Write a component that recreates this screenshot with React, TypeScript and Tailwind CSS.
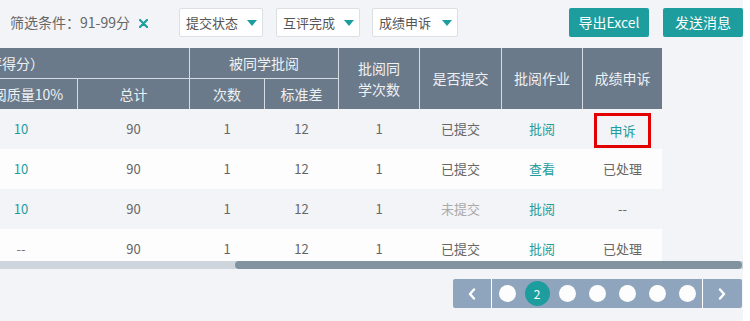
import React from "react";

const COLS = "grid-cols-[112px_111px_74px_73px_80px_81px_80px_79px]";

function Dropdown({ label, w }: { label: string; w: string }) {
  return (
    <div
      className={`${w} h-[29px] bg-white border border-[#dcdfe3] rounded-[2px] flex items-center justify-between pl-[6px] pr-[5px] text-[13px] text-[#555]`}
    >
      <span>{label}</span>
      <span className="w-0 h-0 border-l-[5.5px] border-r-[5.5px] border-t-[6px] border-l-transparent border-r-transparent border-t-[#1d9d9e]" />
    </div>
  );
}

type Row = {
  q: string;
  total: string;
  times: string;
  sd: string;
  peer: string;
  submit: string;
  review: string;
  appeal: string;
};

const rows: Row[] = [
  { q: "10", total: "90", times: "1", sd: "12", peer: "1", submit: "已提交", review: "批阅", appeal: "申诉" },
  { q: "10", total: "90", times: "1", sd: "12", peer: "1", submit: "已提交", review: "查看", appeal: "已处理" },
  { q: "10", total: "90", times: "1", sd: "12", peer: "1", submit: "未提交", review: "批阅", appeal: "--" },
  { q: "--", total: "90", times: "1", sd: "12", peer: "1", submit: "已提交", review: "批阅", appeal: "已处理" },
];

export default function App() {
  return (
    <div
      className="w-[750px] h-[321px] bg-white overflow-hidden"
      style={{ fontFamily: '"Noto Sans CJK SC", "Noto Sans", sans-serif' }}
    >
      <div className="w-[743px] h-full bg-[#f3f4f7] flex flex-col">
        {/* top bar */}
        <div className="h-[45px] flex items-center pl-[10px] shrink-0">
          <div className="w-[169px] flex items-center">
            <span className="text-[14px] text-[#666]">筛选条件：91-99分</span>
            <svg width="9" height="9" viewBox="0 0 9 9" className="ml-[9px] mt-[2px]">
              <path d="M1 1 L8 8 M8 1 L1 8" stroke="#1d9d9e" strokeWidth="2.2" strokeLinecap="round" />
            </svg>
          </div>
          <Dropdown label="提交状态" w="w-[84px]" />
          <div className="ml-[13px]">
            <Dropdown label="互评完成" w="w-[84px]" />
          </div>
          <div className="ml-[12px]">
            <Dropdown label="成绩申诉" w="w-[86px]" />
          </div>
          <div className="ml-auto flex gap-[14px]">
            <button className="w-[80px] h-[29px] bg-[#1d9d9e] text-white text-[14px] rounded-[2px] flex items-center justify-center">
              导出Excel
            </button>
            <button className="w-[80px] h-[29px] bg-[#1d9d9e] text-white text-[14px] rounded-[2px] flex items-center justify-center">
              发送消息
            </button>
          </div>
        </div>

        {/* table */}
        <div className="mt-[3px] w-full h-[213px] overflow-hidden shrink-0">
          <div className="ml-[-35px] w-[697px]">
            <div
              className={`grid ${COLS} grid-rows-[30px_30px] gap-px bg-[#d6dce2] text-[14px] text-[#eef1f4]`}
            >
              <div className="col-span-2 bg-[#6b7a8a] flex items-center justify-end pr-[145px] whitespace-nowrap">
                （互评得分）
              </div>
              <div className="col-span-2 bg-[#6b7a8a] flex items-center justify-center">被同学批阅</div>
              <div className="row-span-2 bg-[#6b7a8a] flex items-center justify-center text-center leading-[21px]">
                批阅同
                <br />
                学次数
              </div>
              <div className="row-span-2 bg-[#6b7a8a] flex items-center justify-center">是否提交</div>
              <div className="row-span-2 bg-[#6b7a8a] flex items-center justify-center">批阅作业</div>
              <div className="row-span-2 bg-[#6b7a8a] flex items-center justify-center">成绩申诉</div>
              <div className="bg-[#6b7a8a] flex items-center justify-center whitespace-nowrap">批阅质量10%</div>
              <div className="bg-[#6b7a8a] flex items-center justify-center">总计</div>
              <div className="bg-[#6b7a8a] flex items-center justify-center">次数</div>
              <div className="bg-[#6b7a8a] flex items-center justify-center">标准差</div>
            </div>
            {rows.map((r, i) => (
              <div
                key={i}
                className={`grid ${COLS} gap-x-px h-[40px] items-center text-center text-[13px] text-[#666] ${
                  i % 2 === 0 ? "bg-[#f3f4f7]" : "bg-[#fdfdfd]"
                }`}
              >
                <div className={r.q === "--" ? "text-[#777]" : "text-[#1d9d9e]"}>{r.q}</div>
                <div>{r.total}</div>
                <div>{r.times}</div>
                <div>{r.sd}</div>
                <div>{r.peer}</div>
                <div className={r.submit === "未提交" ? "text-[#aaa]" : ""}>{r.submit}</div>
                <div className="text-[#1d9d9e]">{r.review}</div>
                <div className="flex items-center justify-center">
                  {i === 0 ? (
                    <span className="w-[57px] h-[35px] mt-[3px] border-[3px] border-[#e30000] flex items-center justify-center text-[#1d9d9e]">
                      {r.appeal}
                    </span>
                  ) : (
                    <span>{r.appeal}</span>
                  )}
                </div>
              </div>
            ))}
          </div>
        </div>

        {/* scrollbar */}
        <div className="h-[8px] w-full bg-[#cfd5dc] flex shrink-0">
          <div className="ml-[235px] flex-1 mr-[1px] bg-[#81939f] rounded-full" />
        </div>

        {/* pagination */}
        <div className="mt-[10px] flex justify-end pr-[1px]">
          <div className="h-[29px] w-[289px] bg-[#8fa5bd] rounded-[2px] flex">
            <div className="w-[39px] flex items-center justify-center border-r border-white">
              <svg width="8" height="12" viewBox="0 0 8 12">
                <path d="M6 1.5 L2 6 L6 10.5" fill="none" stroke="white" strokeWidth="2.4" strokeLinecap="round" strokeLinejoin="round" />
              </svg>
            </div>
            <div className="w-[210px] flex">
              {[1, 2, 3, 4, 5, 6, 7].map((n) => (
                <div key={n} className="w-[30px] flex items-center justify-center">
                  {n === 2 ? (
                    <span className="w-[25px] h-[25px] rounded-full bg-[#1d9d9e] text-white text-[12px] flex items-center justify-center">
                      2
                    </span>
                  ) : (
                    <span className="w-[17px] h-[17px] rounded-full bg-[#fdfdfd]" />
                  )}
                </div>
              ))}
            </div>
            <div className="w-[39px] flex items-center justify-center border-l border-white">
              <svg width="8" height="12" viewBox="0 0 8 12">
                <path d="M2 1.5 L6 6 L2 10.5" fill="none" stroke="white" strokeWidth="2.4" strokeLinecap="round" strokeLinejoin="round" />
              </svg>
            </div>
          </div>
        </div>
      </div>
    </div>
  );
}
